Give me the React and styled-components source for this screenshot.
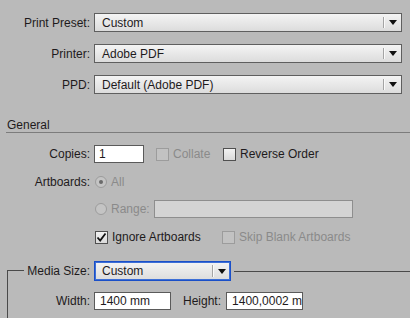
import React from "react";
import styled, { createGlobalStyle } from "styled-components";

const GlobalStyle = createGlobalStyle`
  html, body {
    margin: 0;
    padding: 0;
    background: #bababa;
  }
  body {
    font-family: "Liberation Sans", Arial, sans-serif;
    font-size: 12px;
    color: #1e1a1c;
  }
`;

const Page = styled.div`
  width: 410px;
  height: 318px;
  overflow: hidden;
  padding-top: 13px;
  box-sizing: border-box;
`;

const Row = styled.div`
  display: grid;
  grid-template-columns: ${(p) => p.$label || 90}px 1fr;
  column-gap: 4px;
  align-items: center;
  height: ${(p) => p.$h || 18}px;
  margin-top: ${(p) => p.$mt || 0}px;
`;

const Label = styled.div`
  text-align: right;
  white-space: nowrap;
  color: ${(p) => (p.$disabled ? "#8a8a8a" : "#1e1a1c")};
`;

const SelectBox = styled.div`
  display: flex;
  align-items: stretch;
  height: 100%;
  box-sizing: border-box;
  width: ${(p) => (p.$w ? `${p.$w}px` : "auto")};
  margin-right: ${(p) => (p.$w ? 0 : 8)}px;
  border: 1px solid ${(p) => (p.$focus ? "#1a4fc8" : "#5f5f5f")};
  box-shadow: ${(p) => (p.$focus ? "inset 0 0 0 1px #3d6fd6" : "none")};
  background: linear-gradient(#f4f4f4, #dcdcdc);
`;

const SelectValue = styled.div`
  flex: 1;
  display: flex;
  align-items: center;
  padding-left: 7px;
  white-space: nowrap;
  overflow: hidden;
`;

const SelectArrow = styled.div`
  width: 18px;
  display: flex;
  align-items: center;
  justify-content: center;
  position: relative;
  &::before {
    content: "";
    position: absolute;
    left: 0;
    top: 3px;
    bottom: 3px;
    width: 1px;
    background: #a4a4a4;
    box-shadow: 1px 0 0 #fafafa;
  }
  &::after {
    content: "";
    margin-left: 2px;
    border-left: 4px solid transparent;
    border-right: 4px solid transparent;
    border-top: 5px solid #111;
  }
`;

const Heading = styled.div`
  margin: 24px 0 0 6px;
  padding-left: 1px;
  height: 14px;
  line-height: 14px;
  border-bottom: 1px solid #7c7c7c;
`;

const Controls = styled.div`
  display: flex;
  align-items: center;
  height: 100%;
`;

const TextField = styled.div`
  width: ${(p) => p.$w}px;
  height: 18px;
  box-sizing: border-box;
  border: 1px solid ${(p) => (p.$disabled ? "#8e8e8e" : "#5a5a5a")};
  background: ${(p) => (p.$disabled ? "#d4d4d4" : "#fff")};
  padding-left: ${(p) => p.$pad || 5}px;
  line-height: 16px;
  white-space: nowrap;
  overflow: hidden;
  margin-left: ${(p) => p.$ml || 0}px;
`;

const Item = styled.div`
  display: flex;
  align-items: center;
  gap: 4px;
  width: ${(p) => (p.$w ? `${p.$w}px` : "auto")};
  margin-left: ${(p) => p.$ml || 0}px;
  color: ${(p) => (p.$disabled ? "#8a8a8a" : "#1e1a1c")};
  white-space: nowrap;
`;

const Box = styled.div`
  width: 13px;
  height: 13px;
  box-sizing: border-box;
  border: 1px solid ${(p) => (p.$disabled ? "#9c9c9c" : "#505050")};
  background: ${(p) =>
    p.$disabled ? "#c2c2c2" : "linear-gradient(#f2f2f2, #dadada)"};
  display: flex;
  align-items: center;
  justify-content: center;
`;

const Radio = styled.div`
  width: 12px;
  height: 12px;
  box-sizing: border-box;
  border-radius: 50%;
  border: 1px solid #9c9c9c;
  background: #c4c4c4;
  display: flex;
  align-items: center;
  justify-content: center;
  &::after {
    content: "";
    width: 4px;
    height: 4px;
    border-radius: 50%;
    background: ${(p) => (p.$on ? "#6a6a6a" : "transparent")};
  }
`;

const Group = styled.div`
  margin: 15px 0 0 7px;
`;

const GroupHead = styled.div`
  display: grid;
  grid-template-columns: 83px 137px 1fr;
  column-gap: 4px;
  align-items: center;
  height: 20px;
`;

const Legend = styled.div`
  display: flex;
  align-items: center;
  height: 100%;
  white-space: nowrap;
`;

const Lead = styled.div`
  flex: 1;
  align-self: flex-end;
  height: 10px;
  margin-right: 3px;
  border-top: 1px solid #4a4a4a;
  border-left: 1px solid #4a4a4a;
`;

const Rule = styled.div`
  height: 1px;
  margin-left: -1px;
  background: #4a4a4a;
`;

const GroupBody = styled.div`
  border-left: 1px solid #4a4a4a;
  padding-top: 11px;
  height: 40px;
`;

const Check = () => (
  <svg width="11" height="11" viewBox="0 0 11 11">
    <path d="M1.5 5.5 L4.2 8.5 L9.5 1.5" fill="none" stroke="#111" strokeWidth="1.8" />
  </svg>
);

const Dropdown = ({ value, width, focus }) => (
  <SelectBox $w={width} $focus={focus}>
    <SelectValue>{value}</SelectValue>
    <SelectArrow />
  </SelectBox>
);

export default function App() {
  return (
    <Page>
      <GlobalStyle />
      <Row $h={19}>
        <Label>Print Preset:</Label>
        <Dropdown value="Custom" />
      </Row>
      <Row $h={19} $mt={12}>
        <Label>Printer:</Label>
        <Dropdown value="Adobe PDF" />
      </Row>
      <Row $h={19} $mt={12}>
        <Label>PPD:</Label>
        <Dropdown value="Default (Adobe PDF)" />
      </Row>

      <Heading>General</Heading>

      <Row $mt={12}>
        <Label>Copies:</Label>
        <Controls>
          <TextField $w={50} $pad={4}>1</TextField>
          <Item $w={67} $ml={12} $disabled>
            <Box $disabled />
            Collate
          </Item>
          <Item>
            <Box />
            Reverse Order
          </Item>
        </Controls>
      </Row>
      <Row $mt={10}>
        <Label>Artboards:</Label>
        <Controls>
          <Item $ml={1} $disabled>
            <Radio $on />
            All
          </Item>
        </Controls>
      </Row>
      <Row $mt={9}>
        <div />
        <Controls>
          <Item $ml={1} $disabled>
            <Radio />
            Range:
          </Item>
          <TextField $w={199} $ml={4} $disabled />
        </Controls>
      </Row>
      <Row $mt={10}>
        <div />
        <Controls>
          <Item $w={127} $ml={1}>
            <Box>
              <Check />
            </Box>
            Ignore Artboards
          </Item>
          <Item $disabled>
            <Box $disabled />
            Skip Blank Artboards
          </Item>
        </Controls>
      </Row>

      <Group>
        <GroupHead>
          <Legend>
            <Lead />
            Media Size:
          </Legend>
          <Dropdown value="Custom" width={137} focus />
          <Rule />
        </GroupHead>
        <GroupBody>
          <Row $label={82}>
            <Label>Width:</Label>
            <Controls>
              <TextField $w={77}>1400 mm</TextField>
              <Item $ml={12}>Height:</Item>
              <TextField $w={77} $ml={5}>1400,0002 mm</TextField>
            </Controls>
          </Row>
        </GroupBody>
      </Group>
    </Page>
  );
}
